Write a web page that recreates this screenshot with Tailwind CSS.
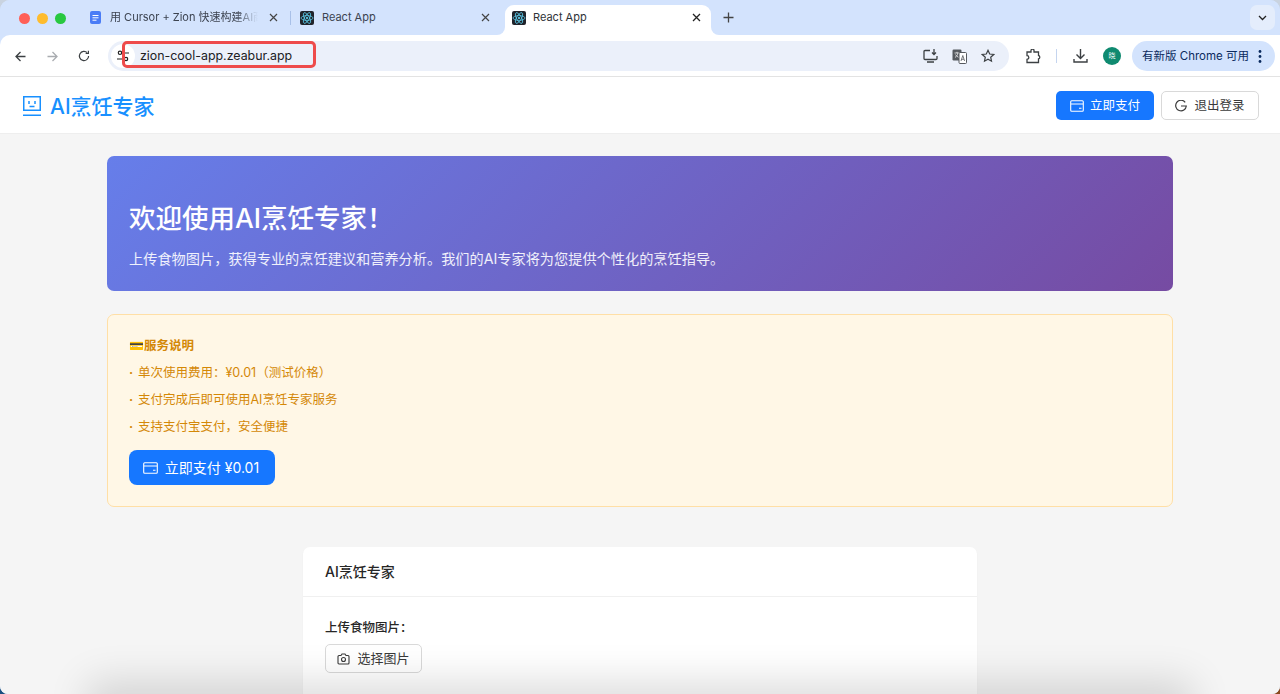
<!DOCTYPE html>
<html lang="zh">
<head>
<meta charset="utf-8">
<script src="https://cdn.jsdelivr.net/npm/@tailwindcss/browser@4"></script>
</head>
<body class="m-0 overflow-hidden bg-[#c9d3e0]">
<div class="relative w-[1280px] h-[694px] overflow-hidden">
  <!-- desktop wallpaper showing through the window's rounded corners -->
  <div class="absolute left-0 bottom-0 w-[12px] h-[12px] bg-[#1b4f80]"></div>
  <div class="absolute right-0 bottom-0 w-[12px] h-[12px] bg-[#8a4a1e]"></div>

<div class="relative w-[1280px] h-[694px] overflow-hidden rounded-t-[10px] rounded-b-[8px] flex flex-col font-['Inter','Noto_Sans_CJK_SC',sans-serif] text-[#1f1f1f] bg-[#d3e3fd]">

  <!-- tab strip -->
  <div class="h-[35px] shrink-0 bg-[#d3e3fd] flex items-center relative">
    <div class="flex items-center gap-[7px] ml-[19px] w-[46px] mt-px">
      <span class="shrink-0 w-[11px] h-[11px] rounded-full bg-[#ff5f57]"></span>
      <span class="shrink-0 w-[11px] h-[11px] rounded-full bg-[#febc2e]"></span>
      <span class="shrink-0 w-[11px] h-[11px] rounded-full bg-[#28c840]"></span>
    </div>
    <!-- tab 1 -->
    <svg width="11" height="13" viewBox="0 0 11 13" class="shrink-0 ml-[25px]"><rect width="11" height="13" rx="2" fill="#4a7cf6"/><path d="M2.500 4.500h6M2.500 6.800h6M2.500 9.200h4" stroke="#fff" stroke-width="1"/></svg>
    <span class="ml-[9px] w-[148px] shrink-0 overflow-hidden whitespace-nowrap text-[11px] text-[#3c4350] [mask-image:linear-gradient(to_right,black_85%,transparent)]">用 Cursor + Zion 快速构建AI商</span>
    <svg width="9" height="9" viewBox="0 0 9 9" class="shrink-0 ml-[11px]"><path d="M1 1l7 7M8 1l-7 7" stroke="#444" stroke-width="1.200"/></svg>
    <span class="shrink-0 w-px h-[14px] bg-[#a8c0e8] ml-[12px]"></span>
    <!-- tab 2 -->
    <svg width="14" height="14" viewBox="0 0 14 14" class="shrink-0 ml-[9px]"><rect width="14" height="14" rx="2" fill="#20232a"/><g fill="none" stroke="#61dafb" stroke-width=".7"><ellipse cx="7" cy="7" rx="6" ry="2.400"/><ellipse cx="7" cy="7" rx="6" ry="2.400" transform="rotate(60 7 7)"/><ellipse cx="7" cy="7" rx="6" ry="2.400" transform="rotate(120 7 7)"/></g><circle cx="7" cy="7" r="1.100" fill="#61dafb"/></svg>
    <span class="ml-[8px] w-[159px] shrink-0 text-[11px] text-[#3c4350]">React App</span>
    <svg width="9" height="9" viewBox="0 0 9 9" class="shrink-0"><path d="M1 1l7 7M8 1l-7 7" stroke="#444" stroke-width="1.200"/></svg>
    <!-- active tab -->
    <div class="relative flex items-center shrink-0 w-[206px] h-[30px] self-end ml-[15px] bg-white rounded-t-[9px] pl-[7px]">
      <span class="absolute left-[-8px] bottom-0 w-[8px] h-[8px] bg-white"><span class="block w-full h-full bg-[#d3e3fd] rounded-br-[8px]"></span></span>
      <span class="absolute right-[-8px] bottom-0 w-[8px] h-[8px] bg-white"><span class="block w-full h-full bg-[#d3e3fd] rounded-bl-[8px]"></span></span>
      <svg width="14" height="14" viewBox="0 0 14 14" class="shrink-0 -mt-[5px]"><rect width="14" height="14" rx="2" fill="#20232a"/><g fill="none" stroke="#61dafb" stroke-width=".7"><ellipse cx="7" cy="7" rx="6" ry="2.400"/><ellipse cx="7" cy="7" rx="6" ry="2.400" transform="rotate(60 7 7)"/><ellipse cx="7" cy="7" rx="6" ry="2.400" transform="rotate(120 7 7)"/></g><circle cx="7" cy="7" r="1.100" fill="#61dafb"/></svg>
      <span class="ml-[7px] w-[159px] shrink-0 text-[11px] text-[#2f3338] -mt-[5px]">React App</span>
      <svg width="9" height="9" viewBox="0 0 9 9" class="shrink-0 -mt-[5px]"><path d="M1 1l7 7M8 1l-7 7" stroke="#222" stroke-width="1.300"/></svg>
    </div>
    <svg width="11" height="11" viewBox="0 0 11 11" class="shrink-0 ml-[12px]"><path d="M5.500 .5v10M.5 5.500h10" stroke="#444" stroke-width="1.300"/></svg>
    <div class="absolute left-[1250px] top-[5px] w-[25px] h-[25px] rounded-[7px] bg-[#e4edfc] flex items-center justify-center">
      <svg width="9" height="6" viewBox="0 0 9 6"><path d="M1 1l3.500 3.500L8 1" fill="none" stroke="#222" stroke-width="1.300"/></svg>
    </div>
  </div>

  <!-- toolbar -->
  <div class="h-[42px] shrink-0 bg-white border-b border-[#e3e3e3] rounded-tl-[10px] flex items-center relative pt-[1px]">
    <svg width="11" height="11" viewBox="0 0 11 11" class="shrink-0 ml-[15px]"><path d="M10.500 5.500H1.500M5.500 1l-4.500 4.500 4.500 4.500" fill="none" stroke="#3c4043" stroke-width="1.300"/></svg>
    <svg width="11" height="11" viewBox="0 0 11 11" class="shrink-0 ml-[21px]"><path d="M.5 5.500h9M5.500 1l4.500 4.500-4.500 4.500" fill="none" stroke="#a9acb0" stroke-width="1.300"/></svg>
    <svg width="12" height="12" viewBox="0 0 13 13" class="shrink-0 ml-[20px]"><path d="M11.500 6.500a5 5 0 1 1-1.500-3.600M11.300 .8v3h-3" fill="none" stroke="#3c4043" stroke-width="1.300"/></svg>
    <!-- omnibox -->
    <div class="shrink-0 ml-[18px] w-[901px] h-[30px] rounded-full bg-[#ebf0fa] flex items-center">
      <span class="shrink-0 ml-[3px] w-[24px] h-[24px] rounded-full bg-white flex items-center justify-center">
        <svg width="12" height="12" viewBox="0 0 12 12"><circle cx="3" cy="2.800" r="1.700" fill="none" stroke="#222" stroke-width="1.200"/><path d="M7 3h5M0 9h5" stroke="#222" stroke-width="1.200"/><circle cx="9" cy="9" r="1.700" fill="none" stroke="#222" stroke-width="1.200"/></svg>
      </span>
      <span class="ml-[5px] mt-px text-[12.400px] text-[#202124] whitespace-nowrap">zion-cool-app.zeabur.app</span>
      <span class="ml-auto flex items-center">
        <svg width="15" height="14" viewBox="0 0 15 14"><path d="M7 1.500H2a1 1 0 0 0-1 1v7a1 1 0 0 0 1 1h11a1 1 0 0 0 1-1V7M4 13h7M11 0v5M9 3.500l2 2 2-2" fill="none" stroke="#3c4043" stroke-width="1.300"/></svg>
        <svg width="15" height="15" viewBox="0 0 15 15" class="ml-[14px]"><rect x=".5" y=".5" width="9" height="11" rx="1.200" fill="#55595e"/><path d="M2.500 4h5M5 2.800V4M3 8.500c1.500-1 2.500-2.500 3-4.500M3.500 5.500c.8 1.500 2 2.500 3.500 3" fill="none" stroke="#fff" stroke-width=".7"/><rect x="7" y="3.500" width="7.500" height="11" rx="1" fill="#fff" stroke="#55595e"/><path d="M9 12l1.800-5.500L12.600 12M9.700 10.300h2.200" fill="none" stroke="#55595e" stroke-width=".8"/></svg>
        <svg width="14" height="14" viewBox="0 0 14 14" class="ml-[14px] mr-[14px]"><path d="M7 1.300l1.700 3.700 4 .5-3 2.700.8 4-3.500-2-3.500 2 .8-4-3-2.700 4-.5z" fill="none" stroke="#3c4043" stroke-width="1.200"/></svg>
      </span>
    </div>
    <svg width="16" height="15" viewBox="0 0 16 15" class="shrink-0 ml-[16px]"><path d="M6 1.500a1.500 1.500 0 0 1 3 0V3h4.500v3.500a1.700 1.700 0 0 1 0 3.300V13.500H2v-3.200a1.800 1.800 0 0 0 0-3.600V3h4z" fill="none" stroke="#3c4043" stroke-width="1.300"/></svg>
    <span class="shrink-0 ml-[15px] w-px h-[14px] bg-[#c5d5ef]"></span>
    <svg width="15" height="14" viewBox="0 0 15 14" class="shrink-0 ml-[16px]"><path d="M7.500 0v9M3.500 5.500l4 4 4-4M1 10v3h13v-3" fill="none" stroke="#3c4043" stroke-width="1.400"/></svg>
    <span class="shrink-0 ml-[15px] w-[18px] h-[18px] rounded-full bg-[#0f8a70] text-white text-[7px] flex items-center justify-center">晓</span>
    <div class="shrink-0 ml-[11px] w-[143px] h-[30px] rounded-full bg-[#d3e3fd] flex items-center pl-[10px] text-[11.500px] text-[#0a2a5e] whitespace-nowrap">
      <span class="mt-px">有新版 Chrome 可用</span>
      <svg width="4" height="13" viewBox="0 0 4 13" class="ml-[9px]"><circle cx="2" cy="1.500" r="1.400" fill="#0a2a5e"/><circle cx="2" cy="6.500" r="1.400" fill="#0a2a5e"/><circle cx="2" cy="11.500" r="1.400" fill="#0a2a5e"/></svg>
    </div>
    <!-- annotation -->
    <div class="absolute left-[122px] top-[6px] w-[194px] h-[27px] border-[3px] border-[#ee4b4b] rounded-[5px]"></div>
  </div>

  <!-- page header -->
  <header class="h-[57px] shrink-0 bg-white border-b border-[#eeeeee] flex items-center justify-between pl-[23px] pr-[21px] pt-[1px]">
    <div class="flex items-center text-[#1890ff]">
      <svg width="18" height="20" viewBox="0 0 18 20"><path d="M.75.75h16.500v13.500H.75z" fill="none" stroke="#1890ff" stroke-width="1.500"/><path d="M6 5v3M12 5v3M6.500 10.500h5M0 19.200h18" fill="none" stroke="#1890ff" stroke-width="1.500"/></svg>
      <span class="ml-[9px] text-[21px] font-medium leading-none mt-[1px]">AI烹饪专家</span>
    </div>
    <div class="flex items-center gap-[7px]">
      <div class="w-[98px] h-[29px] rounded-[5px] bg-[#1677ff] text-white text-[12.500px] flex items-center justify-center">
        <svg width="14" height="12" viewBox="0 0 14 12"><rect x=".7" y=".7" width="12.600" height="10.600" rx="1" fill="none" stroke="#fff" stroke-width="1.100"/><path d="M1 4h12M9 8.200h2.500" stroke="#fff" stroke-width="1.100"/></svg>
        <span class="ml-[6px] mt-px">立即支付</span>
      </div>
      <div class="w-[98px] h-[29px] rounded-[5px] bg-white border border-[#d9d9d9] text-[#3a3a3a] text-[12.500px] flex items-center justify-center">
        <svg width="12" height="12" viewBox="0 0 12 12"><path d="M10.200 2.300A5.300 5.300 0 1 0 11.300 6H6" fill="none" stroke="#3a3a3a" stroke-width="1.200"/></svg>
        <span class="ml-[7px] mt-px">退出登录</span>
      </div>
    </div>
  </header>

  <!-- content -->
  <main class="flex-1 px-[107px] pt-[22px] flex flex-col bg-[#f5f5f5] min-h-0">
    <section class="h-[135px] shrink-0 rounded-[7px] bg-linear-[135deg,#667eea,#764ba2] text-white pl-[22px] pt-[46px]">
      <h1 class="text-[26.500px] font-medium leading-[32px] mb-[15px]">欢迎使用AI烹饪专家！</h1>
      <p class="text-[14.200px] leading-[20px] text-white/90">上传食物图片，获得专业的烹饪建议和营养分析。我们的AI专家将为您提供个性化的烹饪指导。</p>
    </section>

    <section class="mt-[23px] h-[193px] shrink-0 rounded-[7px] bg-[#fff7e6] border border-[#ffdfa6] pl-[21px] pt-[21px]">
      <div class="h-[20px] flex items-center text-[12.500px] font-semibold text-[#d48806]"><span class="text-[12px]">💳</span><span>服务说明</span></div>
      <ul class="text-[12.500px] text-[#d48806]">
        <li class="h-[27px] mt-[4px] flex items-center"><span class="w-[9px] font-bold">·</span>单次使用费用：¥0.01（测试价格）</li>
        <li class="h-[27px] flex items-center"><span class="w-[9px] font-bold">·</span>支付完成后即可使用AI烹饪专家服务</li>
        <li class="h-[27px] flex items-center"><span class="w-[9px] font-bold">·</span>支持支付宝支付，安全便捷</li>
      </ul>
      <div class="mt-[9px] w-[146px] h-[35px] rounded-[8px] bg-[#1677ff] text-white text-[14px] flex items-center justify-center">
        <svg width="15" height="12" viewBox="0 0 15 12" class="-ml-[2px]"><rect x=".7" y=".7" width="13.600" height="10.600" rx="1" fill="none" stroke="#fff" stroke-width="1.100"/><path d="M1 4h13M10 8.200h2.500" stroke="#fff" stroke-width="1.100"/></svg>
        <span class="ml-[7px]">立即支付 ¥0.01</span>
      </div>
    </section>

    <section class="mt-[40px] ml-[196px] w-[674px] flex-1 rounded-t-[7px] bg-white shadow-[0_1px_2px_rgba(0,0,0,0.04)]">
      <div class="h-[50px] border-b border-[#f0f0f0] flex items-center pl-[22px] text-[14px] font-medium text-[#262626]">AI烹饪专家</div>
      <div class="pl-[22px] pt-[22px]">
        <div class="text-[12.500px] font-medium text-[#262626] leading-[18px]">上传食物图片：</div>
        <div class="mt-[7px] w-[97px] h-[29px] rounded-[5px] bg-white border border-[#d9d9d9] text-[13px] text-[#3a3a3a] flex items-center justify-center">
          <svg width="13" height="12" viewBox="0 0 13 12"><path d="M1 3.500a1 1 0 0 1 1-1h2l1-1.500h3l1 1.500h2a1 1 0 0 1 1 1V10a1 1 0 0 1-1 1H2a1 1 0 0 1-1-1z" fill="none" stroke="#3a3a3a" stroke-width="1.100"/><circle cx="6.500" cy="6.500" r="2" fill="none" stroke="#3a3a3a" stroke-width="1.100"/></svg>
          <span class="ml-[7px]">选择图片</span>
        </div>
      </div>
    </section>
  </main>

  <!-- soft window shadow rising from the bottom edge -->
  <div class="absolute left-[110px] right-[110px] top-[704px] h-[10px] shadow-[0_0_40px_22px_rgba(0,0,0,0.14)] pointer-events-none"></div>
</div>
</div>
</body>
</html>
